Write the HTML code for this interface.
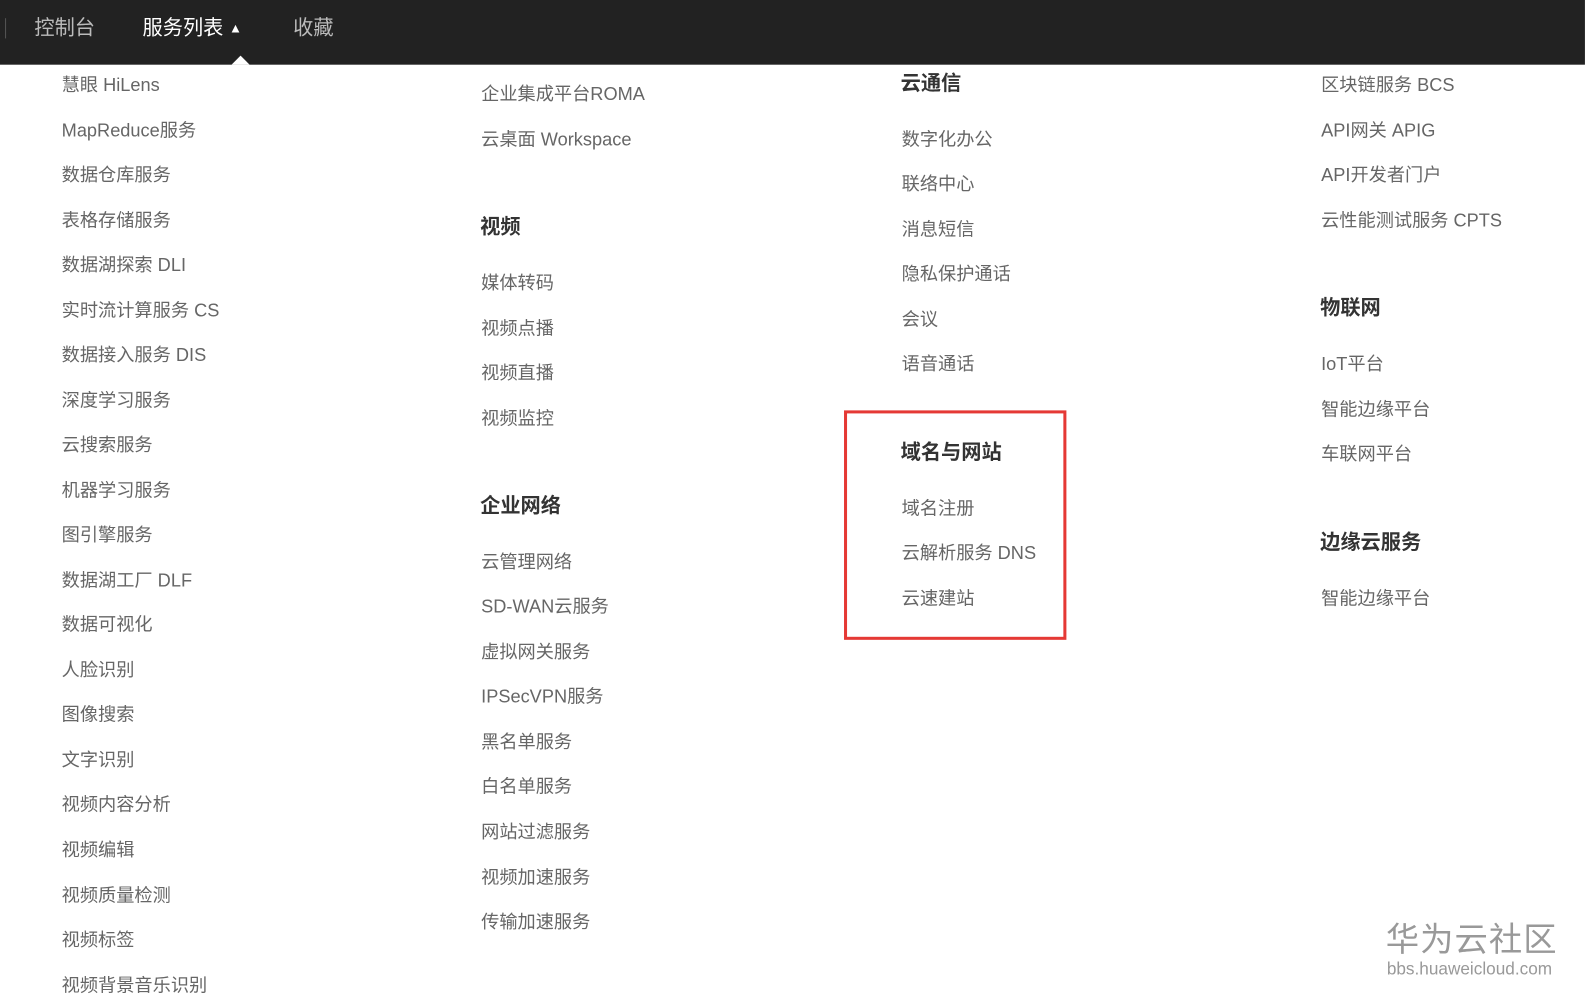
<!DOCTYPE html>
<html><head><meta charset="utf-8"><style>
*{margin:0;padding:0}
html,body{width:1585px;height:1006px;overflow:hidden;background:#fff}
body{position:relative;font-family:"Liberation Sans","Noto Sans CJK SC",sans-serif}
#w{position:absolute;left:0;top:0;width:1568px;height:996px;transform:scale(1.0108);transform-origin:0 0}
.nav{position:absolute;left:0;top:0;width:1568px;height:64px;background:#222}
.n{position:absolute;top:14px;font-size:20px;line-height:28px;color:#bbb}
.i{position:absolute;font-size:18px;line-height:24px;color:#666;white-space:nowrap}
.h{position:absolute;font-size:20px;line-height:26px;color:#333;font-weight:bold;white-space:nowrap}
</style></head><body><div id="w">
<div class="nav">
<div style="position:absolute;left:5px;top:18px;width:1px;height:20px;background:#555"></div>
<div class="n" style="left:34px">控制台</div>
<div class="n" style="left:141px;color:#fff">服务列表 <span style="font-size:13px;position:relative;top:-2px">▲</span></div>
<div class="n" style="left:290px">收藏</div>
<div style="position:absolute;left:229px;top:55px;width:0;height:0;border-left:9px solid transparent;border-right:9px solid transparent;border-bottom:9px solid #fff"></div>
</div>
<div style="position:absolute;left:835px;top:406px;width:214px;height:221px;border:3px solid #e53935"></div>
<div class="i" style="left:61px;top:72px">慧眼 HiLens</div>
<div class="i" style="left:61px;top:117px">MapReduce服务</div>
<div class="i" style="left:61px;top:161px">数据仓库服务</div>
<div class="i" style="left:61px;top:206px">表格存储服务</div>
<div class="i" style="left:61px;top:250px">数据湖探索 DLI</div>
<div class="i" style="left:61px;top:295px">实时流计算服务 CS</div>
<div class="i" style="left:61px;top:339px">数据接入服务 DIS</div>
<div class="i" style="left:61px;top:384px">深度学习服务</div>
<div class="i" style="left:61px;top:428px">云搜索服务</div>
<div class="i" style="left:61px;top:473px">机器学习服务</div>
<div class="i" style="left:61px;top:517px">图引擎服务</div>
<div class="i" style="left:61px;top:562px">数据湖工厂 DLF</div>
<div class="i" style="left:61px;top:606px">数据可视化</div>
<div class="i" style="left:61px;top:651px">人脸识别</div>
<div class="i" style="left:61px;top:695px">图像搜索</div>
<div class="i" style="left:61px;top:740px">文字识别</div>
<div class="i" style="left:61px;top:784px">视频内容分析</div>
<div class="i" style="left:61px;top:829px">视频编辑</div>
<div class="i" style="left:61px;top:874px">视频质量检测</div>
<div class="i" style="left:61px;top:918px">视频标签</div>
<div class="i" style="left:61px;top:963px">视频背景音乐识别</div>

<div class="i" style="left:476px;top:81px">企业集成平台ROMA</div>
<div class="i" style="left:476px;top:126px">云桌面 Workspace</div>
<div class="h" style="left:475px;top:212px">视频</div>
<div class="i" style="left:476px;top:268px">媒体转码</div>
<div class="i" style="left:476px;top:313px">视频点播</div>
<div class="i" style="left:476px;top:357px">视频直播</div>
<div class="i" style="left:476px;top:402px">视频监控</div>
<div class="h" style="left:475px;top:488px">企业网络</div>
<div class="i" style="left:476px;top:544px">云管理网络</div>
<div class="i" style="left:476px;top:588px">SD-WAN云服务</div>
<div class="i" style="left:476px;top:633px">虚拟网关服务</div>
<div class="i" style="left:476px;top:677px">IPSecVPN服务</div>
<div class="i" style="left:476px;top:722px">黑名单服务</div>
<div class="i" style="left:476px;top:766px">白名单服务</div>
<div class="i" style="left:476px;top:811px">网站过滤服务</div>
<div class="i" style="left:476px;top:856px">视频加速服务</div>
<div class="i" style="left:476px;top:900px">传输加速服务</div>

<div class="h" style="left:891px;top:70px">云通信</div>
<div class="i" style="left:892px;top:126px">数字化办公</div>
<div class="i" style="left:892px;top:170px">联络中心</div>
<div class="i" style="left:892px;top:215px">消息短信</div>
<div class="i" style="left:892px;top:259px">隐私保护通话</div>
<div class="i" style="left:892px;top:304px">会议</div>
<div class="i" style="left:892px;top:348px">语音通话</div>
<div class="h" style="left:891px;top:435px">域名与网站</div>
<div class="i" style="left:892px;top:491px">域名注册</div>
<div class="i" style="left:892px;top:535px">云解析服务 DNS</div>
<div class="i" style="left:892px;top:580px">云速建站</div>

<div class="i" style="left:1307px;top:72px">区块链服务 BCS</div>
<div class="i" style="left:1307px;top:117px">API网关 APIG</div>
<div class="i" style="left:1307px;top:161px">API开发者门户</div>
<div class="i" style="left:1307px;top:206px">云性能测试服务 CPTS</div>
<div class="h" style="left:1306px;top:292px">物联网</div>
<div class="i" style="left:1307px;top:348px">IoT平台</div>
<div class="i" style="left:1307px;top:393px">智能边缘平台</div>
<div class="i" style="left:1307px;top:437px">车联网平台</div>
<div class="h" style="left:1306px;top:524px">边缘云服务</div>
<div class="i" style="left:1307px;top:580px">智能边缘平台</div>

<div style="position:absolute;left:1371px;top:910px;font-size:33px;line-height:40px;color:#999;letter-spacing:1px">华为云社区</div>
<div style="position:absolute;left:1372px;top:949px;font-size:17px;line-height:20px;color:#999">bbs.huaweicloud.com</div>
</div></body></html>
